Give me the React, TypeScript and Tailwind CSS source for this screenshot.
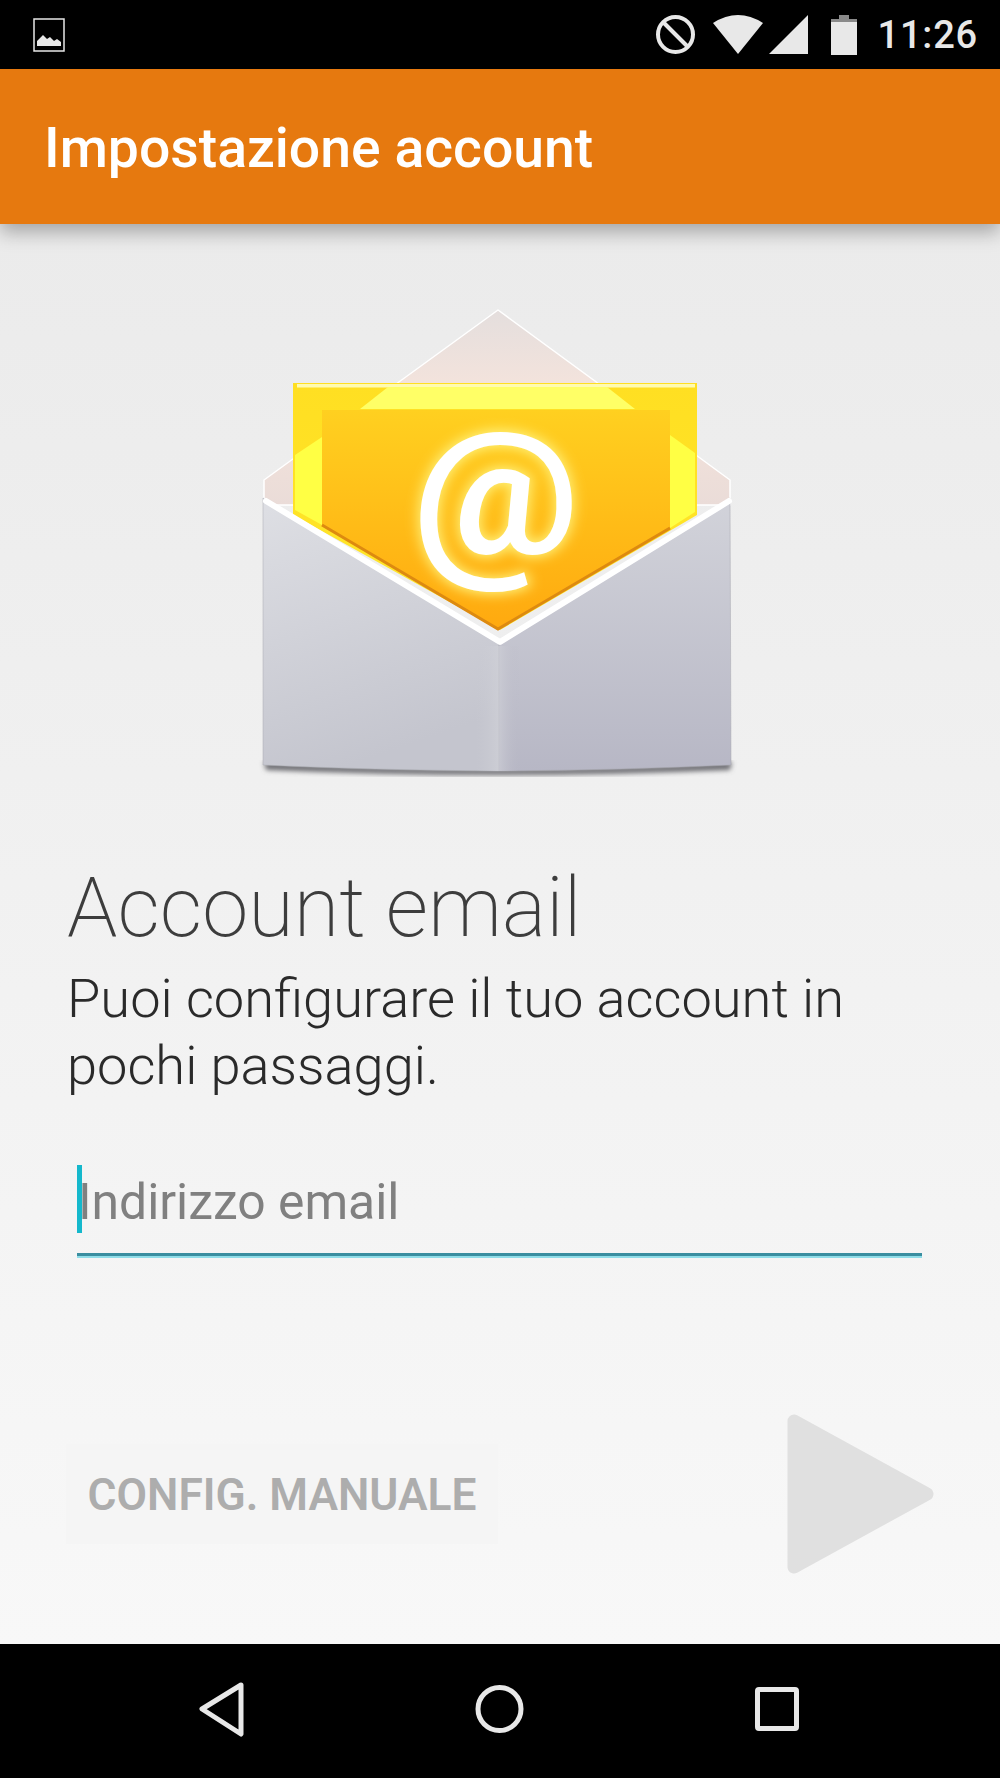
const EnvelopeLogo = () => (
  <svg width="520" height="500" viewBox="0 0 520 500" className="block">
    <defs>
      <linearGradient id="flap" x1="0" y1="0" x2="0" y2="1">
        <stop offset="0" stopColor="#e4dedd" />
        <stop offset="0.45" stopColor="#f6e4dc" />
        <stop offset="1" stopColor="#eadcd8" />
      </linearGradient>
      <linearGradient id="paper" x1="0" y1="0" x2="0" y2="1">
        <stop offset="0" stopColor="#ffdf22" />
        <stop offset="1" stopColor="#ffe62a" />
      </linearGradient>
      <linearGradient id="inner" x1="0" y1="0" x2="0" y2="1">
        <stop offset="0" stopColor="#ffd020" />
        <stop offset="1" stopColor="#ffa90f" />
      </linearGradient>
      <linearGradient id="frontLeft" x1="0" y1="0" x2="0.3" y2="1">
        <stop offset="0" stopColor="#dedfe4" />
        <stop offset="1" stopColor="#c4c5ce" />
      </linearGradient>
      <linearGradient id="frontRight" x1="0" y1="0" x2="0" y2="1">
        <stop offset="0" stopColor="#d2d3da" />
        <stop offset="1" stopColor="#b7b7c5" />
      </linearGradient>
      <linearGradient id="fold" x1="0" y1="0" x2="1" y2="0">
        <stop offset="0" stopColor="#c9cad2" stopOpacity="0" />
        <stop offset="0.5" stopColor="#cfd0d7" stopOpacity="0.7" />
        <stop offset="1" stopColor="#b9b9c6" stopOpacity="0" />
      </linearGradient>
      <filter id="glow" x="-30%" y="-30%" width="160%" height="160%">
        <feGaussianBlur stdDeviation="6" />
      </filter>
      <filter id="soft" x="-10%" y="-10%" width="120%" height="120%">
        <feGaussianBlur stdDeviation="2.5" />
      </filter>
    </defs>

    {/* back flap */}
    <path d="M258 20 L24 190 L24 215 L490 215 L490 190 Z" fill="url(#flap)" stroke="#ffffff" strokeWidth="1.5" strokeLinejoin="round" />

    {/* paper */}
    <path d="M53 93 L457 93 L457 225 L260 340 L53 225 Z" fill="url(#paper)" />
    <rect x="57" y="94" width="398" height="3.5" fill="#fffbb0" />
    <path d="M120 119 L148 97 L367 97 L395 119 Z" fill="#ffff66" />
    <path d="M55 165 L82 147 L82 235 L55 220 Z" fill="#ffff44" />
    <path d="M430 145 L455 163 L455 222 L430 238 Z" fill="#ffff44" />
    <path d="M82 120 L430 120 L430 240 L258 340 L82 235 Z" fill="url(#inner)" />

    {/* @ */}
    <g transform="translate(256 216) scale(1.05 0.98)">
      <text x="0" y="48" textAnchor="middle" fontFamily="Roboto, sans-serif" fontSize="178" fontWeight="500" fill="#fff27a" stroke="#fff27a" strokeWidth="5" filter="url(#glow)">@</text>
      <text x="0" y="48" textAnchor="middle" fontFamily="Roboto, sans-serif" fontSize="178" fontWeight="600" fill="#ffffff">@</text>
    </g>

    {/* bottom shadow */}
    <path d="M24 472 Q258 486 492 472 L490 480 Q258 490 26 480 Z" fill="#6d6d72" filter="url(#soft)" />

    {/* front */}
    <path d="M23 208 L259 353 L259 481 Q130 480 23 475 Z" fill="url(#frontLeft)" stroke="#a9aab0" strokeWidth="0.5" />
    <path d="M259 353 L490 208 L491 475 Q380 480 259 481 Z" fill="url(#frontRight)" stroke="#a4a4ac" strokeWidth="0.5" />
    <rect x="236" y="356" width="44" height="125" fill="url(#fold)" />

    {/* orange rim and white edge of the V */}
    <path d="M82 235 L258 339 L430 238" fill="none" stroke="#dd8a10" strokeWidth="3" />
    <path d="M26 211 L260 352 L489 211" fill="none" stroke="#ffffff" strokeWidth="6" strokeLinejoin="round" strokeLinecap="round" />
  </svg>
);

const StatusBar = () => (
  <div className="flex h-[69px] shrink-0 items-center justify-between bg-black pl-[33px] pr-[22px] text-[#e8e8e8]">
    <svg width="32" height="34" viewBox="0 0 32 34">
      <rect x="1" y="1" width="30" height="32" fill="none" stroke="#e8e8e8" strokeWidth="1.5" />
      <path d="M4 28 L4 23 L10 17 L14 21 L17 19 L21 23 L24 21 L28 24 L28 28 Z" fill="#e8e8e8" />
    </svg>
    <div className="flex items-center">
      <svg width="39" height="39" viewBox="0 0 39 39" className="mr-[18px]">
        <circle cx="19.5" cy="19.5" r="17.5" fill="none" stroke="#e8e8e8" strokeWidth="4" />
        <path d="M7.5 7.5 L31.5 31.5" stroke="#e8e8e8" strokeWidth="4" />
      </svg>
      <svg width="50" height="39" viewBox="0 0 50 39" className="mr-[6px]">
        <path d="M25 39 L0 8 Q25 -8 50 8 Z" fill="#e8e8e8" />
      </svg>
      <svg width="39" height="39" viewBox="0 0 39 39" className="mr-[23px]">
        <path d="M39 0 L39 39 L0 39 Z" fill="#e8e8e8" />
      </svg>
      <svg width="26" height="40" viewBox="0 0 26 40" className="mr-[21px]">
        <rect x="8" y="0" width="10" height="5" fill="#8a8a8a" />
        <rect x="0" y="4" width="26" height="6" fill="#8a8a8a" />
        <rect x="0" y="7" width="26" height="33" fill="#e8e8e8" />
      </svg>
      <span className="text-[38px] font-medium leading-none tracking-[0.8px]">11:26</span>
    </div>
  </div>
);

const NavBar = () => (
  <div className="flex h-[134px] shrink-0 items-center bg-black pb-[4px]">
    <svg width="1000" height="60" viewBox="0 0 1000 60" fill="none" stroke="#e8e8e8" strokeWidth="5" strokeLinejoin="round">
      <path d="M241 6 L202 30 L241 55 Z" />
      <circle cx="499.5" cy="30" r="21.5" />
      <rect x="757.5" y="10.5" width="39" height="39" rx="1.5" />
    </svg>
  </div>
);

export default function App() {
  return (
    <div className="flex h-[1778px] w-full flex-col overflow-hidden font-['Roboto',sans-serif]">
      <StatusBar />

      <header className="relative z-10 flex h-[155px] shrink-0 items-center bg-[#e6790f] pl-[44px] pt-[5px] shadow-[0_8px_18px_rgba(0,0,0,0.3)]">
        <h1 className="text-[55.3px] font-medium leading-none text-white">Impostazione account</h1>
      </header>

      <main className="flex flex-1 flex-col bg-gradient-to-b from-[#ebebeb] to-[#f8f8f8]">
        <div className="mt-[66px] pl-[240px]">
          <EnvelopeLogo />
        </div>

        <div className="mt-[70px] pl-[67px]">
          <h2 className="text-[83px] font-extralight leading-[96px] text-[#3d3d3d]">Account email</h2>
          <p className="mt-[9px] text-[54.2px] font-light leading-[67px] text-[#2a2a2a]">
            Puoi configurare il tuo account in
            <br />
            pochi passaggi.
          </p>
        </div>

        <div className="ml-[77px] mr-[78px] mt-[66px] flex h-[91px] items-start border-b-[3px] border-[#3a8ea0] shadow-[0_2px_0_#8fdde8]">
          <div className="h-[68px] w-[5px] bg-[#14b8cc]" />
          <span className="ml-[-4px] mt-[8px] text-[49.8px] leading-[58px] text-[#808080]">Indirizzo email</span>
        </div>

        <div className="ml-[66px] mr-[66px] mt-[158px] flex items-center justify-between">
          <button className="flex h-[100px] w-[432px] items-center justify-center bg-[#f5f5f5] pt-[2px] text-[44.3px] font-semibold text-[#adadad]">
            CONFIG. MANUALE
          </button>
          <svg width="147" height="160" viewBox="0 0 147 160">
            <path d="M7 7 L140 80 L7 153 Z" fill="#e0e0e0" stroke="#e0e0e0" strokeWidth="13" strokeLinejoin="round" />
          </svg>
        </div>
      </main>

      <NavBar />
    </div>
  );
}
